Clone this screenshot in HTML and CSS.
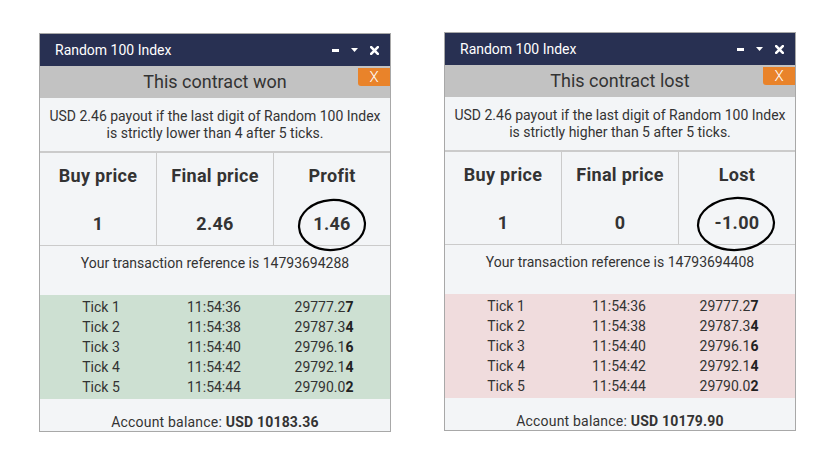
FILE: index.html
```
<!DOCTYPE html>
<html>
<head>
  <title>Contract results</title>
  <link rel="stylesheet" href="styles.css">
</head>
<body>
  <div class="page">

    <div class="dialog won">
      <div class="titlebar">
        <span class="title">Random 100 Index</span>
        <div class="controls">
          <svg width="7" height="3" viewBox="0 0 7 3"><rect width="7" height="3" fill="#fff"/></svg>
          <svg width="7" height="4" viewBox="0 0 7 4"><path d="M0 0H7L3.5 4Z" fill="#fff"/></svg>
          <svg width="9" height="9" viewBox="0 0 9 9"><path d="M1.2 1.2L7.8 7.8M7.8 1.2L1.2 7.8" stroke="#fff" stroke-width="2.6" stroke-linecap="square"/></svg>
        </div>
      </div>
      <div class="status">This contract won<span class="close-btn">X</span></div>
      <div class="desc">USD 2.46 payout if the last digit of Random 100 Index<br>is strictly lower than 4 after 5 ticks.</div>
      <div class="prices">
        <div class="cell"><div class="label">Buy price</div><div class="value">1</div></div>
        <div class="cell"><div class="label">Final price</div><div class="value">2.46</div></div>
        <div class="cell"><div class="label">Profit</div><div class="value circled">1.46
          <svg class="ring" width="70" height="54" viewBox="0 0 70 54"><ellipse cx="35" cy="27" rx="33" ry="25" transform="rotate(-4 35 27)" fill="none" stroke="#000" stroke-width="2.2"/></svg>
        </div></div>
      </div>
      <div class="ref">Your transaction reference is 14793694288</div>
      <div class="ticks">
        <div class="tick"><span>Tick 1</span><span>11:54:36</span><span>29777.2<b>7</b></span></div>
        <div class="tick"><span>Tick 2</span><span>11:54:38</span><span>29787.3<b>4</b></span></div>
        <div class="tick"><span>Tick 3</span><span>11:54:40</span><span>29796.1<b>6</b></span></div>
        <div class="tick"><span>Tick 4</span><span>11:54:42</span><span>29792.1<b>4</b></span></div>
        <div class="tick"><span>Tick 5</span><span>11:54:44</span><span>29790.0<b>2</b></span></div>
      </div>
      <div class="balance">Account balance: <b>USD 10183.36</b></div>
    </div>

    <div class="dialog lost">
      <div class="titlebar">
        <span class="title">Random 100 Index</span>
        <div class="controls">
          <svg width="7" height="3" viewBox="0 0 7 3"><rect width="7" height="3" fill="#fff"/></svg>
          <svg width="7" height="4" viewBox="0 0 7 4"><path d="M0 0H7L3.5 4Z" fill="#fff"/></svg>
          <svg width="9" height="9" viewBox="0 0 9 9"><path d="M1.2 1.2L7.8 7.8M7.8 1.2L1.2 7.8" stroke="#fff" stroke-width="2.6" stroke-linecap="square"/></svg>
        </div>
      </div>
      <div class="status">This contract lost<span class="close-btn">X</span></div>
      <div class="desc">USD 2.46 payout if the last digit of Random 100 Index<br>is strictly higher than 5 after 5 ticks.</div>
      <div class="prices">
        <div class="cell"><div class="label">Buy price</div><div class="value">1</div></div>
        <div class="cell"><div class="label">Final price</div><div class="value">0</div></div>
        <div class="cell"><div class="label">Lost</div><div class="value circled">-1.00
          <svg class="ring wide" width="80" height="56" viewBox="0 0 80 56"><ellipse cx="40" cy="28" rx="38" ry="26" transform="rotate(-3 40 28)" fill="none" stroke="#000" stroke-width="2.2"/></svg>
        </div></div>
      </div>
      <div class="ref">Your transaction reference is 14793694408</div>
      <div class="ticks">
        <div class="tick"><span>Tick 1</span><span>11:54:36</span><span>29777.2<b>7</b></span></div>
        <div class="tick"><span>Tick 2</span><span>11:54:38</span><span>29787.3<b>4</b></span></div>
        <div class="tick"><span>Tick 3</span><span>11:54:40</span><span>29796.1<b>6</b></span></div>
        <div class="tick"><span>Tick 4</span><span>11:54:42</span><span>29792.1<b>4</b></span></div>
        <div class="tick"><span>Tick 5</span><span>11:54:44</span><span>29790.0<b>2</b></span></div>
      </div>
      <div class="balance">Account balance: <b>USD 10179.90</b></div>
    </div>

  </div>
</body>
</html>
```

FILE: styles.css
```
/* Contract result dialogs */

body {
    margin: 0;
    padding: 0;
    background: #fff;
    font-family: Roboto, "Liberation Sans", sans-serif;
    color: #333;
}

.page {
    display: flex;
    align-items: flex-start;
    gap: 53px;
    padding: 32px 0 0 39px;
}

.dialog {
    width: 350px;
    border: 1px solid #a8a8a8;
    background: #f3f5f7;
}

.dialog.won {
    margin-top: 1px;
}

.titlebar {
    display: flex;
    align-items: center;
    justify-content: space-between;
    height: 32px;
    padding: 0 11px 0 15px;
    background: #283052;
    color: #fff;
}

.titlebar .title {
    font-size: 14px;
}

.controls {
    display: flex;
    align-items: center;
    gap: 12px;
}

.controls svg {
    display: block;
}

.status {
    position: relative;
    height: 32px;
    line-height: 32px;
    background: #c2c2c2;
    text-align: center;
    font-size: 18px;
    color: #333;
}

.close-btn {
    position: absolute;
    top: 2px;
    right: 0;
    width: 32px;
    height: 18px;
    line-height: 18px;
    background: #e9832a;
    color: #fff;
    font-size: 15px;
    font-weight: 300;
    text-align: center;
    border-bottom-left-radius: 3px;
}

.desc {
    height: 55px;
    padding-top: 10px;
    box-sizing: border-box;
    text-align: center;
    font-size: 14px;
    line-height: 17px;
    border-bottom: 2px solid #cbcbcb;
}

.prices {
    display: grid;
    grid-template-columns: 117px 117px 116px;
    border-bottom: 1px solid #cbcbcb;
}

.prices .cell {
    height: 92px;
    padding-top: 12px;
    box-sizing: border-box;
    text-align: center;
    font-weight: bold;
    font-size: 18px;
    letter-spacing: 0.3px;
    border-right: 1px solid #cbcbcb;
}

.prices .cell:last-child {
    border-right: none;
}

.prices .label {
    line-height: 22px;
}

.prices .value {
    margin-top: 26px;
    line-height: 22px;
}

.circled {
    position: relative;
}

.ring {
    position: absolute;
    left: 50%;
    top: 50%;
    margin: -26px 0 0 -35px;
}

.ring.wide {
    margin: -27px 0 0 -41px;
}

.ref {
    height: 49px;
    padding-top: 9px;
    box-sizing: border-box;
    text-align: center;
    font-size: 14px;
    line-height: 16px;
}

.ticks {
    padding: 2px 8px 2px 0;
}

.won .ticks {
    background: #cde0d2;
}

.lost .ticks {
    background: #f0dcdd;
}

.tick {
    display: grid;
    grid-template-columns: 122px 104px 116px;
    height: 20px;
    line-height: 20px;
    font-size: 14px;
    text-align: center;
}

.tick b {
    color: #222;
}

.balance {
    height: 32px;
    padding-top: 15px;
    box-sizing: border-box;
    text-align: center;
    font-size: 14px;
    letter-spacing: 0.2px;
    line-height: 16px;
}
```
